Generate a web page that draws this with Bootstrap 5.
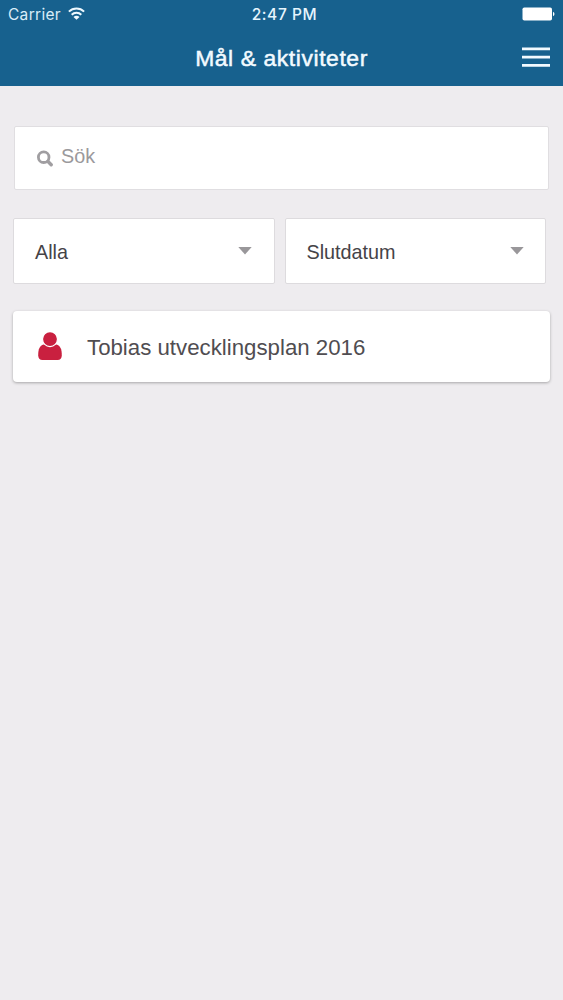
<!DOCTYPE html>
<html lang="sv">
<head>
<meta charset="utf-8">
<meta name="viewport" content="width=device-width, initial-scale=1">
<title>Mål &amp; aktiviteter</title>
<link href="https://cdn.jsdelivr.net/npm/bootstrap@5.3.0/dist/css/bootstrap.min.css" rel="stylesheet">
<style>
  body { background: #eeecef; font-family: "Liberation Sans", Arial, sans-serif; color: #454347; }
  .app-header { background: #17618e; height: 86px; color: #fff; }
  .status-bar { height: 28px; padding: 1px 8px 0; font-family: Inter, sans-serif; font-size: 15.5px; line-height: 27px; }
  .status-bar .carrier { color: #d9edf8; letter-spacing: .3px; }
  .status-bar .wifi { margin-left: 7px; margin-bottom: 2px; }
  .status-bar .battery { margin-bottom: 1px; }
  .status-bar .clock { font-weight: 500; letter-spacing: .6px; color: #e6f5fd; padding-left: 6px; }
  .title-bar { height: 58px; padding: 0 13px; }
  .title-bar h1 { font-size: 22.9px; line-height: 58px; letter-spacing: .58px; color: #f2faff; -webkit-text-stroke: .5px #f2faff; padding-top: 1px; }
  .side { flex: 1 1 0; }
  .page { min-height: 914px; padding: 40px 13px 0; }
  .search-box { height: 64px; margin: 0 1px; padding: 0 22px; border: 1px solid #e0dee1; border-radius: 2px; }
  .search-box input { font-size: 19.8px; color: #454347; padding: 0 0 3px; margin-left: 7px; }
  .search-box input::placeholder { color: #9b999c; opacity: 1; }
  .filters { margin: 28px 4px 0 0; gap: 10px; }
  .filter { height: 66px; padding: 0 22px 0 21px; border: 1px solid #dddbde; border-radius: 2px; font-size: 19.8px; color: #454347; }
  .filter + .filter { padding-right: 21px; }
  .filter span { line-height: 24px; padding-top: 1px; }
  .plan { height: 71px; margin-top: 27px; padding: 0 25px; border-radius: 4px; font-size: 22.25px; color: #504d51; box-shadow: 0 1px 3px rgba(0,0,0,.3); }
  .plan span { line-height: 26px; padding-top: 3px; margin-left: 25px; }
</style>
</head>
<body>
<header class="app-header">
  <div class="status-bar d-flex align-items-center">
    <div class="side d-flex align-items-center">
      <span class="carrier">Carrier</span>
      <svg class="wifi" width="17" height="13" viewBox="0 0 17 13" fill="none" stroke="#eef9ff" stroke-width="2">
        <path d="M.9 4.600a10.800 10.800 0 0 1 15.200 0M3.700 7.700a6.700 6.700 0 0 1 9.600 0"/>
        <path d="M8.500 12.800 5.500 9.900a4.200 4.200 0 0 1 6 0z" fill="#eef9ff" stroke="none"/>
      </svg>
    </div>
    <span class="clock">2:47 PM</span>
    <div class="side d-flex justify-content-end">
      <svg class="battery" width="34" height="14" viewBox="0 0 34 14" fill="#fff">
        <rect x="1.500" y=".5" width="29.500" height="13" rx="1.800"/>
        <path d="M32 4.800c2 .8 2 3.600 0 4.400z"/>
      </svg>
    </div>
  </div>
  <div class="title-bar d-flex align-items-center">
    <div class="side"></div>
    <h1 class="m-0 fw-normal">Mål &amp; aktiviteter</h1>
    <div class="side d-flex justify-content-end">
      <button class="btn p-0 border-0 d-flex" type="button" aria-label="Meny">
        <svg width="28" height="22" viewBox="0 0 28 22" fill="#f2faff"><path d="M0 1.600h28v2.700H0zM0 9.800h28v2.700H0zM0 18h28v2.700H0z"/></svg>
      </button>
    </div>
  </div>
</header>
<main class="page">
  <div class="search-box bg-white d-flex align-items-center">
    <svg class="flex-shrink-0" width="17" height="17" viewBox="0 0 17 17" fill="none" stroke="#a09ea1">
      <circle cx="6.700" cy="7.200" r="5.300" stroke-width="2.800"/>
      <path d="m11 11.500 3.200 3.200" stroke-width="3.400" stroke-linecap="round"/>
    </svg>
    <input class="form-control border-0 shadow-none bg-transparent" type="text" placeholder="Sök">
  </div>
  <div class="filters d-flex">
    <div class="filter bg-white flex-fill w-50 d-flex align-items-center justify-content-between">
      <span>Alla</span>
      <svg width="14" height="8" viewBox="0 0 14 8"><path d="M.3 0h13.400L7 7.400z" fill="#99979a"/></svg>
    </div>
    <div class="filter bg-white flex-fill w-50 d-flex align-items-center justify-content-between">
      <span>Slutdatum</span>
      <svg width="14" height="8" viewBox="0 0 14 8"><path d="M.3 0h13.400L7 7.400z" fill="#99979a"/></svg>
    </div>
  </div>
  <div class="plan bg-white d-flex align-items-center">
    <svg class="flex-shrink-0" width="24" height="29" viewBox="0 0 24 29" fill="#c9203f">
      <path d="M5.500 12.400h13c3.700.8 5.300 4.600 5.300 10.800 0 3.200-1.500 4.800-4.200 4.800H4.400C1.700 28 .2 26.400.2 23.200.2 17 1.800 13.200 5.500 12.400z"/>
      <circle cx="12" cy="7.100" r="7.500" stroke="#fff" stroke-width="1.200"/>
    </svg>
    <span>Tobias utvecklingsplan 2016</span>
  </div>
</main>
<script src="https://cdn.jsdelivr.net/npm/bootstrap@5.3.0/dist/js/bootstrap.bundle.min.js"></script>
</body>
</html>
